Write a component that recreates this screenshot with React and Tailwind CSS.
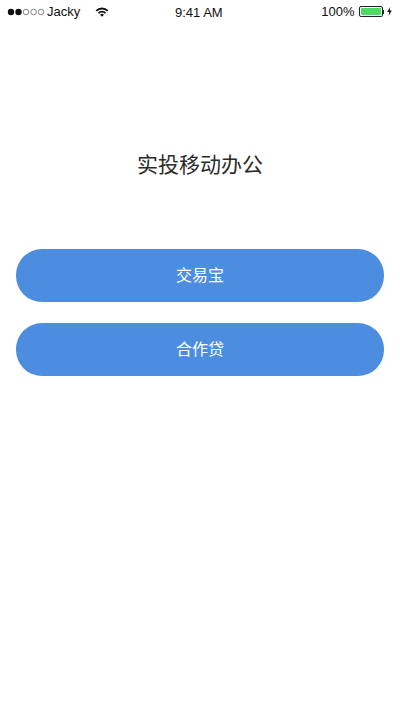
import React from 'react';

const SANS = "font-['Liberation_Sans','Noto_Sans_CJK_SC',sans-serif]";

const Dots = () => (
  <svg width="38" height="8" viewBox="0 0 38 8" className="shrink-0">
    <circle cx="4" cy="4" r="3.2" fill="#111" />
    <circle cx="11.5" cy="4" r="3.2" fill="#111" />
    <circle cx="19" cy="4" r="2.8" fill="none" stroke="#555" strokeWidth="0.7" />
    <circle cx="26.5" cy="4" r="2.8" fill="none" stroke="#555" strokeWidth="0.7" />
    <circle cx="34" cy="4" r="2.8" fill="none" stroke="#555" strokeWidth="0.7" />
  </svg>
);

const Wifi = () => (
  <svg width="14" height="10" viewBox="0 0 14 10" className="shrink-0">
    <path d="M0.6 3.2 A9 9 0 0 1 13.4 3.2 L12.1 4.6 A7.2 7.2 0 0 0 1.9 4.6 Z" fill="#111" />
    <path d="M2.9 5.5 A5.8 5.8 0 0 1 11.1 5.5 L9.8 6.8 A4 4 0 0 0 4.2 6.8 Z" fill="#111" />
    <path d="M5.1 7.7 A2.7 2.7 0 0 1 8.9 7.7 L7 9.8 Z" fill="#111" />
  </svg>
);

const Battery = () => (
  <div className="flex items-center shrink-0">
    <div className="w-[24px] h-[11px] border border-[#222] rounded-[2px] p-px">
      <div className="w-full h-full bg-[#4cd964] rounded-[1px]" />
    </div>
    <div className="w-[1.5px] h-[4px] bg-[#222]" />
  </div>
);

const Bolt = () => (
  <svg width="5" height="9" viewBox="0 0 5 9" className="shrink-0">
    <path d="M3.2 0 L0.2 5 H2.2 L1.6 9 L4.8 3.6 H2.7 Z" fill="#111" />
  </svg>
);

const StatusBar = () => (
  <div className="relative h-[23px] flex items-center justify-between text-[13px] text-[#111] pl-[7px] pr-[8px]">
    <div className="flex items-center">
      <Dots />
      <span className="ml-[2px]">Jacky</span>
      <div className="ml-[15px]"><Wifi /></div>
    </div>
    <span className="absolute left-[175px] top-[3px]">9:41 AM</span>
    <div className="flex items-center">
      <span>100%</span>
      <div className="ml-[4px]"><Battery /></div>
      <div className="ml-[3px]"><Bolt /></div>
    </div>
  </div>
);

const ActionButton = ({ label }) => (
  <button className="h-[53px] w-full rounded-[26px] bg-[#4d8de0] text-white text-[16px]">
    {label}
  </button>
);

export default function App() {
  return (
    <div className={`${SANS} w-[400px] h-[711px] bg-white overflow-hidden`}>
      <StatusBar />
      <h1 className="mt-[126px] text-center text-[21px] leading-[32px] font-normal text-[#2b2b2b]">
        实投移动办公
      </h1>
      <div className="mt-[68px] px-[16px] flex flex-col gap-[21px]">
        <ActionButton label="交易宝" />
        <ActionButton label="合作贷" />
      </div>
    </div>
  );
}
